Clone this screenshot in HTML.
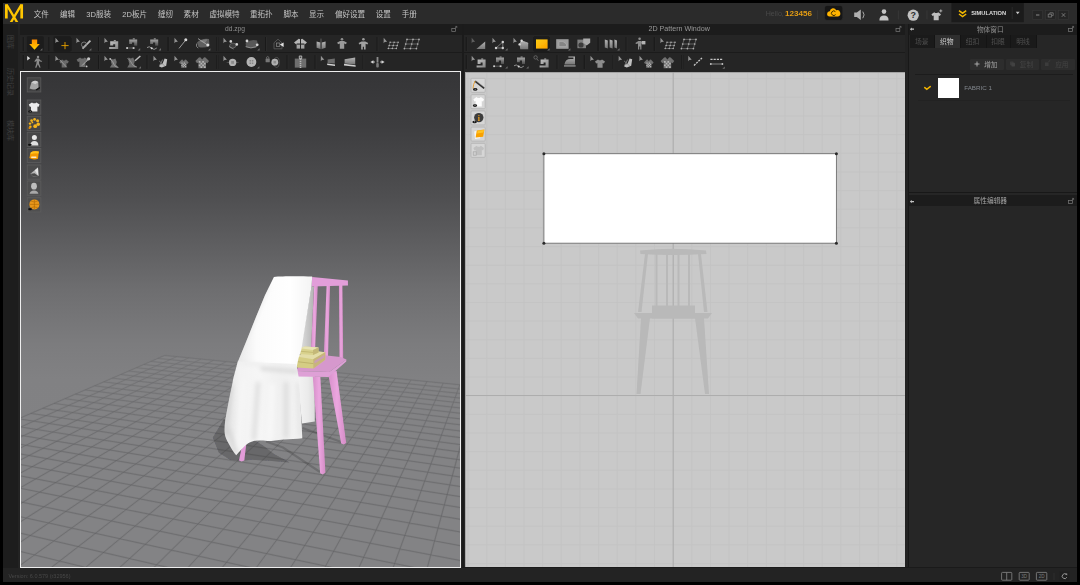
<!DOCTYPE html><html lang="zh-CN"><head><meta charset="utf-8"><title>Marvelous Designer</title><style>
*{margin:0;padding:0;box-sizing:border-box}
html,body{width:1080px;height:585px;background:#000;overflow:hidden}
body{font-family:"Liberation Sans","Noto Sans CJK SC",sans-serif;font-size:8px;color:#bdbdbd;position:relative}
.a{position:absolute}
.t{position:absolute;white-space:nowrap;line-height:1}
svg{position:absolute;overflow:visible}
#app{left:3px;top:3px;width:1074px;height:579px;background:#252525;overflow:hidden}
#menu{left:0;top:0;width:1074px;height:21px;background:#2b2b2b}
.mi{top:8.2px;font-size:7.55px;color:#c4c4c4;filter:blur(0.25px)}
.tb{height:11px;top:21px;background:#1c1c1c}
.tt{top:23.1px;font-size:6.7px;color:#8f8f8f;text-align:center;filter:blur(0.25px)}
.vt{font-size:7px;color:#3f3f3f;transform-origin:0 0;transform:rotate(90deg)}
.sep{width:1px;background:#1a1a1a}
.hl{height:1px;background:#1a1a1a}
</style></head><body>
<div id="app" class="a">
<div id="menu" class="a"></div>
<div class="t mi" style="left:30.8px">文件</div>
<div class="t mi" style="left:57.0px">编辑</div>
<div class="t mi" style="left:83.3px">3D服装</div>
<div class="t mi" style="left:119.3px">2D板片</div>
<div class="t mi" style="left:154.9px">缝纫</div>
<div class="t mi" style="left:180.6px">素材</div>
<div class="t mi" style="left:206.4px">虚拟模特</div>
<div class="t mi" style="left:246.9px">重拓扑</div>
<div class="t mi" style="left:280.4px">脚本</div>
<div class="t mi" style="left:306.0px">显示</div>
<div class="t mi" style="left:331.9px">偏好设置</div>
<div class="t mi" style="left:372.8px">设置</div>
<div class="t mi" style="left:398.7px">手册</div>
<svg width="1074" height="579" viewBox="3 3 1074 579" style="left:0;top:0" ><clipPath id="lc"><rect x="4" y="4.300" width="20" height="17.700"/></clipPath><g fill="none" stroke="#ffc600" clip-path="url(#lc)"><path d="M6.350 18.500V4M21.700 18.500V4" stroke-width="2.700"/><path d="M6.600 4.600L17.300 22.600M21.450 4.600L10.750 22.600" stroke-width="2.300"/></g><rect x="824.4" y="5.400" width="18.400" height="15" rx="2.600" fill="#161616" stroke="#303030" stroke-width="0.6"/><path d="M829.600 16.400a2.600 2.600 0 0 1 0.200-5.200a3.400 3.400 0 0 1 6.400-1a3.200 3.200 0 0 1 1.800 6.200z" fill="#ffb400"/><path d="M835.400 11.600a2.300 2.300 0 1 0 0.200 3" stroke="#3a2a00" stroke-width="1" fill="none"/><path d="M854.200 12.600h2.600l4-3v10.400l-4-3h-2.600z" fill="#b0b0b0"/><path d="M862.800 11.600q2.600 3.200 0 6.600" stroke="#a8a8a8" stroke-width="1" fill="none"/><path d="M817.600 10.400v9M898.400 10.400v9M927 10.400v9" stroke="#3a3a3a" stroke-width="0.8"/><circle cx="884" cy="11.600" r="2.300" fill="#c4c4c4"/><path d="M879.400 20.400q0-5 4.600-5t4.600 5z" fill="#c4c4c4"/><circle cx="913.200" cy="15.200" r="5.600" fill="#c2c2c2"/><text x="913.200" y="18.400" font-size="9" font-weight="bold" text-anchor="middle" fill="#2b2b2b" font-family="Liberation Sans, sans-serif">?</text><path d="M931.4 14.2L934.3 12.2L935.2 13.0L937.2 13.0L938.1 12.2L941.0 14.2L939.8 16.1L938.7 15.6L938.7 20.2L933.7 20.2L933.7 15.6L932.6 16.1Z" fill="#c0c0c0"/><path d="M940.800 9.400v3M939.300 10.900h3" stroke="#c8c8c8" stroke-width="0.800"/><rect x="951.400" y="3" width="72.400" height="19.200" fill="#1b1b1b"/><path d="M959 10.600l3.600 2.600l3.600-2.600M959 14l3.600 2.600l3.600-2.600" stroke="#f2b800" stroke-width="1.500" fill="none"/><path d="M1012.200 7v12" stroke="#2e2e2e" stroke-width="0.8"/><path d="M1015.800 11.800h3.800l-1.900 2.400z" fill="#c8c8c8"/><rect x="1032.8" y="10.600" width="9.800" height="8.800" fill="#252525" stroke="#383838" stroke-width="0.6"/><rect x="1045.6" y="10.600" width="9.800" height="8.800" fill="#252525" stroke="#383838" stroke-width="0.6"/><rect x="1058.6" y="10.600" width="9.800" height="8.800" fill="#252525" stroke="#383838" stroke-width="0.6"/><path d="M1036 15h3.400" stroke="#8a8a8a" stroke-width="1"/><rect x="1048.200" y="14.200" width="3.400" height="2.800" fill="none" stroke="#7a7a7a" stroke-width="0.8"/><path d="M1049.800 14v-1.200h3.400v2.800h-1.400" fill="none" stroke="#7a7a7a" stroke-width="0.8"/><path d="M1061.800 13.200l3.400 3.600M1065.200 13.200l-3.400 3.600" stroke="#7a7a7a" stroke-width="0.9"/></svg><div class="t" style="left:968.200px;top:7.900px;font-size:5.700px;font-weight:bold;color:#dcdcdc;filter:blur(0.2px)">SIMULATION</div><div class="t" style="left:762.700px;top:8px;font-size:7.100px;color:#4a4a4a;filter:blur(0.25px)">Hello,</div><div class="t" style="left:781.900px;top:7.300px;font-size:8.100px;font-weight:bold;color:#e39c14;filter:blur(0.25px)">123456</div>
<div class="a" style="left:0;top:21px;width:15px;height:544px;background:#1d1d1d"></div>
<div class="a" style="left:15px;top:21px;width:2px;height:544px;background:#232323"></div>
<div class="t vt" style="left:11px;top:32px">图库</div>
<div class="t vt" style="left:11px;top:65px">历史记录</div>
<div class="t vt" style="left:11px;top:117px">模块库</div>
<div class="a tb" style="left:17px;width:442px"></div>
<div class="a tb" style="left:461px;width:442px"></div>
<div class="a tb" style="left:906px;width:168px"></div>
<div class="t tt" style="left:132px;width:200px">dd.zpg</div>
<div class="t tt" style="left:576.2px;width:200px;font-size:7.150px;color:#999">2D Pattern Window</div>
<div class="t tt" style="left:887.3px;top:23.900px;width:200px;color:#909090">物体窗口</div>
<div class="a" style="left:17px;top:32px;width:886px;height:36px;background:#252525"></div>
<div class="a hl" style="left:17px;top:49px;width:886px;background:#1b1b1b"></div>
<svg width="1074" height="579" viewBox="3 3 1074 579" style="left:0;top:0" ><defs><filter id="ib" x="-20%" y="-20%" width="140%" height="140%"><feGaussianBlur stdDeviation="0.35"/></filter><linearGradient id="og" x1="0" y1="0" x2="0" y2="1"><stop offset="0" stop-color="#ff8a00"/><stop offset="1" stop-color="#ffd200"/></linearGradient><linearGradient id="og2" x1="0" y1="0" x2="1" y2="1"><stop offset="0" stop-color="#ffcf10"/><stop offset="1" stop-color="#ffa200"/></linearGradient><linearGradient id="mg" x1="0" y1="0" x2="1" y2="1"><stop offset="0" stop-color="#c4c4c4"/><stop offset="1" stop-color="#858585"/></linearGradient><linearGradient id="mf" x1="0" y1="0" x2="0" y2="1"><stop offset="0" stop-color="#a2a2a2"/><stop offset="1" stop-color="#4c4c4c"/></linearGradient><linearGradient id="gg" x1="0" y1="0" x2="0" y2="1"><stop offset="0" stop-color="#b4b4b4"/><stop offset="1" stop-color="#777"/></linearGradient></defs><g filter="url(#ib)"><path d="M23.4 37V51" stroke="#1b1b1b" stroke-width="0.900"/><path d="M24.4 37V51" stroke="#2a2a2a" stroke-width="0.600"/><path d="M48.9 37V51" stroke="#1b1b1b" stroke-width="0.900"/><path d="M49.9 37V51" stroke="#2a2a2a" stroke-width="0.600"/><path d="M23.4 55V69" stroke="#1b1b1b" stroke-width="0.900"/><path d="M24.4 55V69" stroke="#2a2a2a" stroke-width="0.600"/><path d="M48.9 55V69" stroke="#1b1b1b" stroke-width="0.900"/><path d="M49.9 55V69" stroke="#2a2a2a" stroke-width="0.600"/><path d="M466.4 55V69" stroke="#1b1b1b" stroke-width="0.900"/><path d="M467.4 55V69" stroke="#2a2a2a" stroke-width="0.600"/><rect x="26.7" y="36.6" width="16.8" height="15" rx="1" fill="#1b1b1b"/><rect x="53.6" y="36.6" width="17.6" height="15" rx="1" fill="#1b1b1b"/><path d="M31.8 39.4h5.4v4.6h2.6L34.5 49.8L29.2 44h2.6z" fill="url(#og)"/><path d="M42.4 50.6L40.0 50.6L42.4 48.2Z" fill="#6c6c6c"/><path d="M55.5 37.7L58.9 41.8L56.5 42.0L55.4 43.2Z" fill="#929292"/><path d="M65 42v7.200M61.400 45.600h7.200" stroke="#e29c00" stroke-width="0.950"/><path d="M76.5 37.7L79.9 41.8L77.5 42.0L76.4 43.2Z" fill="#929292"/><path d="M82.5 48.6L90.4 40.6" stroke="#b8b8b8" stroke-width="1.8"/><circle cx="84" cy="44.6" r="2.6" fill="none" stroke="#8a8a8a" stroke-width="0.8"/><path d="M91.4 50.6L89.0 50.6L91.4 48.2Z" fill="#6c6c6c"/><path d="M98.5 37V51" stroke="#1b1b1b" stroke-width="0.900"/><path d="M99.5 37V51" stroke="#2a2a2a" stroke-width="0.600"/><path d="M104.5 37.7L107.9 41.8L105.5 42.0L104.4 43.2Z" fill="#929292"/><path d="M110.2 41.2h8v7.8h-9v-2h6v-2.8h-2v1.400h-3z" fill="url(#mg)"/><rect x="113.8" y="40.0" width="2" height="1.400" fill="#9a9a9a"/><path d="M129.2 39.4h8v6.400h-3v-3.400h-2.200v1.600h-2.800z" fill="url(#mf)"/><rect x="132.8" y="38.2" width="2" height="1.400" fill="#8a8a8a"/><path d="M127 48h7" stroke="#6a6a6a" stroke-width="0.800"/><rect x="126.200" y="47.200" width="1.800" height="1.700" fill="#cfcfcf"/><rect x="132.700" y="47.200" width="1.800" height="1.700" fill="#cfcfcf"/><path d="M140.2 50.4L137.79999999999998 50.4L140.2 48.0Z" fill="#6c6c6c"/><path d="M150.2 39.4h8v6.400h-3v-3.400h-2.200v1.600h-2.800z" fill="url(#mf)"/><rect x="153.8" y="38.2" width="2" height="1.400" fill="#8a8a8a"/><path d="M147 47.600q2.200-2 4.600 0.600t5.200-0.200" stroke="#9a9a9a" stroke-width="0.900" fill="none"/><circle cx="151.700" cy="48.200" r="1" fill="#d4d4d4"/><path d="M161 50.4L158.6 50.4L161 48.0Z" fill="#6c6c6c"/><path d="M168.3 37V51" stroke="#1b1b1b" stroke-width="0.900"/><path d="M169.3 37V51" stroke="#2a2a2a" stroke-width="0.600"/><path d="M174.5 37.7L177.9 41.8L175.5 42.0L174.4 43.2Z" fill="#929292"/><path d="M179 48.4L185.6 40.2" stroke="#a8a8a8" stroke-width="0.9"/><circle cx="185.8" cy="39.8" r="1.5" fill="#d8d8d8"/><path d="M197 42.4q5-4.6 12-3.4l0.6 6.4q-5 3.4-11 1.6z" fill="#5e5e5e"/><path d="M199.600 41q4-2 8-1.600l-3 4z" fill="#7a7a7a"/><path d="M198 38.6L207.6 45" stroke="#a4a4a4" stroke-width="0.9"/><circle cx="207.8" cy="45" r="1.5" fill="#dcdcdc"/><path d="M196.6 43.6q-1 3 1.6 4.6" stroke="#9a9a9a" stroke-width="0.8" fill="none"/><path d="M210.4 50.6L208.0 50.6L210.4 48.2Z" fill="#6c6c6c"/><path d="M216.7 37V51" stroke="#1b1b1b" stroke-width="0.900"/><path d="M217.7 37V51" stroke="#2a2a2a" stroke-width="0.600"/><path d="M223.5 37.7L226.9 41.8L224.5 42.0L223.4 43.2Z" fill="#929292"/><path d="M229.600 45.600q1-4 7-1.400q-0.600 4-4 4t-3-2.600z" fill="#3c3c3c" stroke="#6c6c6c" stroke-width="0.800"/><circle cx="230.8" cy="41.4" r="1.3" fill="#d4d4d4"/><circle cx="236.8" cy="44.4" r="1.3" fill="#d4d4d4"/><path d="M229 46.4l4.6 2.6" stroke="#8c8c8c" stroke-width="0.8"/><path d="M245.600 43q6-4.600 11.400-2.400q1.600 4.600-1 7q-5 1.600-10-0.600z" fill="#585858"/><circle cx="247" cy="41" r="1.4" fill="#d4d4d4"/><circle cx="257.2" cy="44.8" r="1.4" fill="#d4d4d4"/><path d="M245.6 46.6q5 2.6 11 0" stroke="#999" stroke-width="0.8" fill="none"/><path d="M259.6 50.6L257.20000000000005 50.6L259.6 48.2Z" fill="#6c6c6c"/><path d="M265.5 37V51" stroke="#1b1b1b" stroke-width="0.900"/><path d="M266.5 37V51" stroke="#2a2a2a" stroke-width="0.600"/><path d="M274 42.800l4-3.600l4 3.600v6h-8z" fill="none" stroke="#585858" stroke-width="0.900"/><rect x="276.400" y="43" width="3.400" height="3.400" fill="#2c2c2c" stroke="#8a8a8a" stroke-width="0.700"/><path d="M279.800 44.600l3.800-2v4.400z" fill="#e0e0e0"/><path d="M294 42.6l4.8-3.8l1.2 0.4v4.4h-3.4v1.2z" fill="#b6b6b6"/><path d="M307 42.6l-4.8-3.8l-1.2 0.4v4.4h3.4v1.2z" fill="#b6b6b6"/><rect x="296.6" y="44.6" width="3.4" height="4" fill="#a2a2a2"/><rect x="301" y="44.6" width="3.4" height="4" fill="#a2a2a2"/><path d="M316.6 41.6l3.8 1v6.4l-3.8-1.2zM325.6 41.6l-3.8 1v6.4l3.8-1.2z" fill="url(#gg)"/><path d="M321 38.6v10.6" stroke="#6a6a6a" stroke-width="0.8"/><circle cx="342" cy="39.2" r="1.3" fill="#8e8e8e"/><path d="M337.2 42.6l3-1.6h3.6l3 1.6l-0.8 1.6l-1.8-0.6v5.2h-4.4v-5.2l-1.8 0.6z" fill="#9a9a9a"/><circle cx="363.4" cy="39.2" r="1.3" fill="#9a9a9a"/><path d="M358.6 43l3-1.6h3.6l3 1.6l-0.8 1.4l-1.8-0.6v5.6h-1.6v-2.6h-1.2v2.6h-1.6v-5.6l-1.8 0.6z" fill="#a2a2a2"/><path d="M377 37V51" stroke="#1b1b1b" stroke-width="0.900"/><path d="M378 37V51" stroke="#2a2a2a" stroke-width="0.600"/><path d="M383.7 37.7L387.1 41.8L384.7 42.0L383.6 43.2Z" fill="#929292"/><path d="M390.1 42.3H398.1M390.1 42.3L388.3 48.5M389.2 45.4H397.2M394.1 42.3L392.3 48.5M388.3 48.5H396.3M398.1 42.3L396.3 48.5" stroke="#6e6e6e" stroke-width="0.8" fill="none"/><circle cx="390.1" cy="42.3" r="0.75" fill="#b4b4b4"/><circle cx="394.1" cy="42.3" r="0.75" fill="#b4b4b4"/><circle cx="398.1" cy="42.3" r="0.75" fill="#b4b4b4"/><circle cx="389.2" cy="45.4" r="0.75" fill="#b4b4b4"/><circle cx="393.2" cy="45.4" r="0.75" fill="#b4b4b4"/><circle cx="397.2" cy="45.4" r="0.75" fill="#b4b4b4"/><circle cx="388.3" cy="48.5" r="0.75" fill="#b4b4b4"/><circle cx="392.3" cy="48.5" r="0.75" fill="#b4b4b4"/><circle cx="396.3" cy="48.5" r="0.75" fill="#b4b4b4"/><path d="M407.0 39.4H419.0M407.0 39.4L404.4 48.6M405.7 44.0H417.7M413.0 39.4L410.4 48.6M404.4 48.6H416.4M419.0 39.4L416.4 48.6" stroke="#6e6e6e" stroke-width="0.8" fill="none"/><circle cx="407.0" cy="39.4" r="0.85" fill="#b0b0b0"/><circle cx="413.0" cy="39.4" r="0.85" fill="#b0b0b0"/><circle cx="419.0" cy="39.4" r="0.85" fill="#b0b0b0"/><circle cx="405.7" cy="44.0" r="0.85" fill="#b0b0b0"/><circle cx="411.7" cy="44.0" r="0.85" fill="#b0b0b0"/><circle cx="417.7" cy="44.0" r="0.85" fill="#b0b0b0"/><circle cx="404.4" cy="48.6" r="0.85" fill="#b0b0b0"/><circle cx="410.4" cy="48.6" r="0.85" fill="#b0b0b0"/><circle cx="416.4" cy="48.6" r="0.85" fill="#b0b0b0"/><path d="M27.2 56l3 2.2l-3 2.2z" fill="#dcdcdc"/><circle cx="38" cy="57" r="1.2" fill="#8c8c8c"/><path d="M36.4 58.6l2.4-0.2l1.8 2.2l1.6 0.4l-0.4 0.8l-2-0.2l-0.6-0.8l-0.2 2.4l1.6 4.2l-1 0.4l-1.8-3.6l-1.6 3.8l-1-0.4l1.2-4.2l0.2-2.6l-1.6 1.2l-0.6-0.8z" fill="#8c8c8c"/><path d="M55.5 55.7L58.9 59.8L56.5 60.0L55.4 61.2Z" fill="#929292"/><path d="M59.4 61.6L62.2 59.6L63.2 60.4L65.0 60.4L66.0 59.6L68.8 61.6L67.7 63.5L66.5 63.0L66.5 67.6L61.7 67.6L61.7 63.0L60.5 63.5Z" fill="#6a6a6a"/><path d="M59.6 59.6l7 7.6" stroke="#a2a2a2" stroke-width="0.8"/><path d="M76.6 59.7L80.1 57.4L81.2 58.4L83.6 58.4L84.7 57.4L88.2 59.7L86.8 62.1L85.4 61.5L85.4 67.0L79.4 67.0L79.4 61.5L78.0 62.1Z" fill="#6c6c6c"/><path d="M82 65.6L89.6 58" stroke="#b4b4b4" stroke-width="0.9"/><circle cx="88.6" cy="58.8" r="1.6" fill="#c8c8c8"/><circle cx="86.6" cy="66.4" r="0.9" fill="#c8c8c8"/><path d="M98.5 55V69" stroke="#1b1b1b" stroke-width="0.900"/><path d="M99.5 55V69" stroke="#2a2a2a" stroke-width="0.600"/><path d="M104.5 55.7L107.9 59.8L105.5 60.0L104.4 61.2Z" fill="#929292"/><path d="M110.600 58.600l2.400 0.800l2.400-0.800l1.400 3.400l-0.800 2.600l2.200 3h-8.400l2-3l-0.800-2.600z" fill="#707070"/><path d="M110 58.800q3.200 2.600 4 5.600t4.400 3" stroke="#a8a8a8" stroke-width="0.800" fill="none"/><circle cx="110.200" cy="59" r="0.900" fill="#b8b8b8"/><path d="M128.400 57.600l2.400 0.800l2.400-0.800l1.600 3.600l-0.800 2.800l2.600 3.400h-9.400l2.200-3.400l-0.800-2.800z" fill="#6c6c6c"/><path d="M127.600 58.200q3.200 2.600 4.400 5.600t5 3.200" stroke="#a0a0a0" stroke-width="0.800" fill="none"/><path d="M135 60.800l5.400-4.800" stroke="#bcbcbc" stroke-width="1.500"/><path d="M141 68.6L138.6 68.6L141 66.19999999999999Z" fill="#6c6c6c"/><path d="M147 55V69" stroke="#1b1b1b" stroke-width="0.900"/><path d="M148 55V69" stroke="#2a2a2a" stroke-width="0.600"/><path d="M153.5 55.7L156.9 59.8L154.5 60.0L153.4 61.2Z" fill="#929292"/><path d="M164.6 58.4l2.6 0.8l-1 6.6l-4.4 1.8l-2.6-1l0.6-2.2l2.6-0.4z" fill="#c0c0c0"/><path d="M159.2 61l5.6 5M162.6 59.6l-2.6 5.6" stroke="#8c8c8c" stroke-width="0.8"/><path d="M174.5 55.7L177.9 59.8L175.5 60.0L174.4 61.2Z" fill="#929292"/><path d="M179.0 62.4L181.5 59.7L182.5 59.5L183.8 61.2L185.1 59.5L186.1 59.7L188.6 62.4L187.4 64.0L186.5 63.4L186.5 67.8L181.1 67.8L181.1 63.4L180.2 64.0Z" fill="#6f6f6f"/><path d="M181.4 62.5h1.2v1.2h-1.2zM181.4 64.9h1.2v1.2h-1.2zM182.6 63.7h1.2v1.2h-1.2zM182.6 66.1h1.2v1.2h-1.2zM183.8 62.5h1.2v1.2h-1.2zM183.8 64.9h1.2v1.2h-1.2zM185.0 63.7h1.2v1.2h-1.2zM185.0 66.1h1.2v1.2h-1.2z" fill="#b4b4b4"/><path d="M195.4 61.1L198.9 57.6L200.3 57.3L202.2 59.5L204.1 57.3L205.5 57.6L209.0 61.1L207.4 63.2L206.0 62.5L206.0 68.2L198.4 68.2L198.4 62.5L197.0 63.2Z" fill="#6f6f6f"/><path d="M198.8 61.1h1.7v1.7h-1.7zM198.8 64.5h1.7v1.7h-1.7zM200.5 62.8h1.7v1.7h-1.7zM200.5 66.2h1.7v1.7h-1.7zM202.2 61.1h1.7v1.7h-1.7zM202.2 64.5h1.7v1.7h-1.7zM203.9 62.8h1.7v1.7h-1.7zM203.9 66.2h1.7v1.7h-1.7z" fill="#b4b4b4"/><path d="M216.7 55V69" stroke="#1b1b1b" stroke-width="0.900"/><path d="M217.7 55V69" stroke="#2a2a2a" stroke-width="0.600"/><path d="M223.5 55.7L226.9 59.8L224.5 60.0L223.4 61.2Z" fill="#929292"/><path d="M226.600 62.400h12" stroke="#5a5a5a" stroke-width="0.700"/><circle cx="232.600" cy="62.400" r="3.700" fill="#b2b2b2"/><rect x="231.200" y="61" width="2.800" height="2.800" fill="#8c8c8c"/><circle cx="251.400" cy="62" r="4.900" fill="#b4b4b4"/><path d="M249.500 60.100h1.500v1.500h-1.500zM251.800 60.100h1.500v1.500h-1.500zM249.500 62.400h1.500v1.500h-1.500zM251.800 62.400h1.500v1.500h-1.500z" fill="#868686"/><path d="M259.4 68.6L257.0 68.6L259.4 66.19999999999999Z" fill="#6c6c6c"/><rect x="265.6" y="58.6" width="4.2" height="3.6" rx="0.5" fill="#777"/><path d="M266.6 58.6v-1.400q1.100-1.400 2.200 0v1.400" stroke="#777" stroke-width="0.8" fill="none"/><ellipse cx="276.600" cy="62.400" rx="2.600" ry="5" fill="none" stroke="#5a5a5a" stroke-width="0.800"/><circle cx="274.800" cy="62.200" r="3.400" fill="#b2b2b2"/><rect x="273.500" y="60.900" width="2.600" height="2.600" fill="#8c8c8c"/><path d="M287 55V69" stroke="#1b1b1b" stroke-width="0.900"/><path d="M288 55V69" stroke="#2a2a2a" stroke-width="0.600"/><rect x="294.8" y="58.6" width="11.400" height="9" fill="#6e6e6e"/><path d="M300.500 57v11" stroke="#b8b8b8" stroke-width="1.6" stroke-dasharray="1.2 0.8"/><rect x="298.8" y="55.6" width="3.400" height="3.600" rx="1" fill="#a8a8a8"/><rect x="299.800" y="56.6" width="1.400" height="1.400" fill="#4a4a4a"/><path d="M315 55V69" stroke="#1b1b1b" stroke-width="0.900"/><path d="M316 55V69" stroke="#2a2a2a" stroke-width="0.600"/><path d="M320.9 55.7L324.3 59.8L321.9 60.0L320.8 61.2Z" fill="#929292"/><path d="M327.6 59.400l7.200-0.800v4.800l-7.200-0.400z" fill="#6c6c6c"/><path d="M327.200 63.400l7.800 1v1.600l-7.800-1z" fill="#d4d4d4"/><path d="M344.6 59.200l10.600-1.800v7l-10.600-1z" fill="url(#gg)"/><path d="M344 63.800l11.600 1.400v1.600l-11.600-1.400z" fill="#cfcfcf"/><path d="M362.8 55V69" stroke="#1b1b1b" stroke-width="0.900"/><path d="M363.8 55V69" stroke="#2a2a2a" stroke-width="0.600"/><rect x="376.600" y="57" width="1.800" height="5.600" fill="#8c8c8c"/><rect x="376.200" y="63" width="2.600" height="4.400" rx="1" fill="#7a7a7a"/><path d="M370.400 62l3-1.800v3.600zM384.600 62l-3-1.800v3.600z" fill="#d4d4d4"/><path d="M372.600 62h2.200M380.200 62h2.200" stroke="#d4d4d4" stroke-width="1.2"/><path d="M466.4 37V51" stroke="#1b1b1b" stroke-width="0.900"/><path d="M467.4 37V51" stroke="#2a2a2a" stroke-width="0.600"/><path d="M471.7 37.7L475.1 41.8L472.7 42.0L471.6 43.2Z" fill="#5e5e5e"/><path d="M476.4 49l8.800-7.400v7.400z" fill="url(#gg)"/><path d="M492.5 37.7L495.9 41.8L493.5 42.0L492.4 43.2Z" fill="#929292"/><path d="M496 48l6.800-6v6z" fill="none" stroke="#8a8a8a" stroke-width="0.8"/><circle cx="496" cy="48" r="1.200" fill="#d0d0d0"/><circle cx="502.800" cy="42" r="1.200" fill="#d0d0d0"/><circle cx="502.800" cy="48" r="1.200" fill="#d0d0d0"/><path d="M507.6 50.6L505.20000000000005 50.6L507.6 48.2Z" fill="#6c6c6c"/><path d="M513.5 37.7L516.9 41.8L514.5 42.0L513.4 43.2Z" fill="#929292"/><path d="M519.600 44.400l2-3.600l6.600 2.400v6h-8z" fill="url(#gg)"/><path d="M519.600 44.400l2-3.600l6.600 2.400" fill="none" stroke="#b8b8b8" stroke-width="0.8"/><circle cx="521.6" cy="40.800" r="1.200" fill="#d8d8d8"/><circle cx="519.600" cy="44.400" r="1.200" fill="#d8d8d8"/><rect x="533.2" y="36.6" width="16.600" height="15" rx="1" fill="#1b1b1b"/><rect x="536" y="39.400" width="11.600" height="9.200" fill="url(#og2)"/><path d="M549.6 50.6L547.2 50.6L549.6 48.2Z" fill="#6c6c6c"/><rect x="556.200" y="39.200" width="12.400" height="9.600" fill="#9c9c9c"/><path d="M559 41.600h4l3.400 2.400v2.600h-7.400z" fill="#848484" stroke="#b4b4b4" stroke-width="0.6"/><path d="M570.4 50.6L568.0 50.6L570.4 48.2Z" fill="#6c6c6c"/><rect x="577.4" y="39.600" width="8.600" height="8.600" fill="#7e7e7e"/><circle cx="581" cy="45" r="2.600" fill="#3a3a3a"/><path d="M583.2 38.400h7v4.400l-3.500 2.800l-3.500-2.800z" fill="#ababab"/><path d="M598.3 37V51" stroke="#1b1b1b" stroke-width="0.900"/><path d="M599.3 37V51" stroke="#2a2a2a" stroke-width="0.600"/><path d="M604.8 39.400l3 1v8l-3-1zM609.600 39.400l3 1v8l-3-1zM614.400 39.400l2.600 1v8l-2.600-1z" fill="url(#gg)"/><path d="M619.6 50.6L617.2 50.6L619.6 48.2Z" fill="#6c6c6c"/><path d="M626 37V51" stroke="#1b1b1b" stroke-width="0.900"/><path d="M627 37V51" stroke="#2a2a2a" stroke-width="0.600"/><circle cx="639.600" cy="38.800" r="1.300" fill="#8e8e8e"/><path d="M635.400 43l3-2h2.600l3 2l-0.600 1l-2-0.600v6h-1.200v-2.800h-1v2.800h-1.200v-6l-2 0.600z" fill="#8e8e8e"/><rect x="642" y="41" width="3.400" height="3.400" fill="#b4b4b4"/><path d="M654.4 37V51" stroke="#1b1b1b" stroke-width="0.900"/><path d="M655.4 37V51" stroke="#2a2a2a" stroke-width="0.600"/><path d="M660.5 37.7L663.9 41.8L661.5 42.0L660.4 43.2Z" fill="#929292"/><path d="M667.0 42.3H675.0M667.0 42.3L665.2 48.5M666.1 45.4H674.1M671.0 42.3L669.2 48.5M665.2 48.5H673.2M675.0 42.3L673.2 48.5" stroke="#6e6e6e" stroke-width="0.8" fill="none"/><circle cx="667.0" cy="42.3" r="0.75" fill="#b4b4b4"/><circle cx="671.0" cy="42.3" r="0.75" fill="#b4b4b4"/><circle cx="675.0" cy="42.3" r="0.75" fill="#b4b4b4"/><circle cx="666.1" cy="45.4" r="0.75" fill="#b4b4b4"/><circle cx="670.1" cy="45.4" r="0.75" fill="#b4b4b4"/><circle cx="674.1" cy="45.4" r="0.75" fill="#b4b4b4"/><circle cx="665.2" cy="48.5" r="0.75" fill="#b4b4b4"/><circle cx="669.2" cy="48.5" r="0.75" fill="#b4b4b4"/><circle cx="673.2" cy="48.5" r="0.75" fill="#b4b4b4"/><path d="M684.0 39.4H696.0M684.0 39.4L681.4 48.6M682.7 44.0H694.7M690.0 39.4L687.4 48.6M681.4 48.6H693.4M696.0 39.4L693.4 48.6" stroke="#6e6e6e" stroke-width="0.8" fill="none"/><circle cx="684.0" cy="39.4" r="0.85" fill="#b0b0b0"/><circle cx="690.0" cy="39.4" r="0.85" fill="#b0b0b0"/><circle cx="696.0" cy="39.4" r="0.85" fill="#b0b0b0"/><circle cx="682.7" cy="44.0" r="0.85" fill="#b0b0b0"/><circle cx="688.7" cy="44.0" r="0.85" fill="#b0b0b0"/><circle cx="694.7" cy="44.0" r="0.85" fill="#b0b0b0"/><circle cx="681.4" cy="48.6" r="0.85" fill="#b0b0b0"/><circle cx="687.4" cy="48.6" r="0.85" fill="#b0b0b0"/><circle cx="693.4" cy="48.6" r="0.85" fill="#b0b0b0"/><path d="M471.7 55.7L475.1 59.8L472.7 60.0L471.6 61.2Z" fill="#929292"/><path d="M477.6 59.6h8v7.8h-9v-2h6v-2.8h-2v1.400h-3z" fill="url(#mg)"/><rect x="481.2" y="58.4" width="2" height="1.400" fill="#9a9a9a"/><path d="M496.0 57.6h8v6.400h-3v-3.400h-2.200v1.600h-2.800z" fill="url(#mf)"/><rect x="499.6" y="56.4" width="2" height="1.400" fill="#8a8a8a"/><path d="M494 66.200h7" stroke="#6a6a6a" stroke-width="0.800"/><rect x="493.200" y="65.400" width="1.800" height="1.700" fill="#cfcfcf"/><rect x="499.700" y="65.400" width="1.800" height="1.700" fill="#cfcfcf"/><path d="M507.6 68.6L505.20000000000005 68.6L507.6 66.19999999999999Z" fill="#6c6c6c"/><path d="M517.0 57.6h8v6.400h-3v-3.400h-2.200v1.600h-2.800z" fill="url(#mf)"/><rect x="520.6" y="56.4" width="2" height="1.400" fill="#8a8a8a"/><path d="M514 65.800q2.200-2 4.600 0.600t5.200-0.200" stroke="#9a9a9a" stroke-width="0.900" fill="none"/><circle cx="518.700" cy="66.400" r="1" fill="#d4d4d4"/><path d="M528.6 68.6L526.2 68.6L528.6 66.19999999999999Z" fill="#6c6c6c"/><circle cx="535.600" cy="57.400" r="1.700" fill="none" stroke="#777" stroke-width="0.7"/><path d="M536.800 58.800l1.600 2" stroke="#777" stroke-width="0.8"/><path d="M540.6 59.6h8v7.8h-9v-2h6v-2.8h-2v1.400h-3z" fill="url(#mg)"/><rect x="544.2" y="58.4" width="2" height="1.400" fill="#9a9a9a"/><path d="M557 55V69" stroke="#1b1b1b" stroke-width="0.900"/><path d="M558 55V69" stroke="#2a2a2a" stroke-width="0.600"/><path d="M564.400 64.400q1-5.400 6-5.400h3v-1.400h-5v-1.200h6.600v8z" fill="url(#gg)"/><rect x="564" y="65" width="11.600" height="1.800" fill="#777"/><path d="M584.4 55V69" stroke="#1b1b1b" stroke-width="0.900"/><path d="M585.4 55V69" stroke="#2a2a2a" stroke-width="0.600"/><path d="M590.5 55.7L593.9 59.8L591.5 60.0L590.4 61.2Z" fill="#929292"/><path d="M595.0 61.5L598.0 59.4L599.0 60.2L601.0 60.2L602.0 59.4L605.0 61.5L603.8 63.5L602.6 62.9L602.6 67.8L597.4 67.8L597.4 62.9L596.2 63.5Z" fill="#8c8c8c"/><path d="M612.8 55V69" stroke="#1b1b1b" stroke-width="0.900"/><path d="M613.8 55V69" stroke="#2a2a2a" stroke-width="0.600"/><path d="M618.7 55.7L622.1 59.8L619.7 60.0L618.6 61.2Z" fill="#929292"/><path d="M629.600 58.400l2.600 0.800l-1 6.600l-4.400 1.800l-2.600-1l0.600-2.200l2.600-0.400z" fill="#c0c0c0"/><path d="M624.200 61l5.600 5M627.600 59.600l-2.600 5.600" stroke="#8c8c8c" stroke-width="0.8"/><path d="M639.5 55.7L642.9 59.8L640.5 60.0L639.4 61.2Z" fill="#929292"/><path d="M644.0 62.4L646.5 59.7L647.5 59.5L648.8 61.2L650.1 59.5L651.1 59.7L653.6 62.4L652.4 64.0L651.5 63.4L651.5 67.8L646.1 67.8L646.1 63.4L645.2 64.0Z" fill="#6f6f6f"/><path d="M646.4 62.5h1.2v1.2h-1.2zM646.4 64.9h1.2v1.2h-1.2zM647.6 63.7h1.2v1.2h-1.2zM647.6 66.1h1.2v1.2h-1.2zM648.8 62.5h1.2v1.2h-1.2zM648.8 64.9h1.2v1.2h-1.2zM650.0 63.7h1.2v1.2h-1.2zM650.0 66.1h1.2v1.2h-1.2z" fill="#b4b4b4"/><path d="M660.6 61.1L664.1 57.6L665.5 57.3L667.4 59.5L669.3 57.3L670.7 57.6L674.2 61.1L672.6 63.2L671.2 62.5L671.2 68.2L663.6 68.2L663.6 62.5L662.2 63.2Z" fill="#6f6f6f"/><path d="M664.0 61.1h1.7v1.7h-1.7zM664.0 64.5h1.7v1.7h-1.7zM665.7 62.8h1.7v1.7h-1.7zM665.7 66.2h1.7v1.7h-1.7zM667.4 61.1h1.7v1.7h-1.7zM667.4 64.5h1.7v1.7h-1.7zM669.1 62.8h1.7v1.7h-1.7zM669.1 66.2h1.7v1.7h-1.7z" fill="#b4b4b4"/><path d="M681.7 55V69" stroke="#1b1b1b" stroke-width="0.900"/><path d="M682.7 55V69" stroke="#2a2a2a" stroke-width="0.600"/><path d="M688.3 55.7L691.7 59.8L689.3 60.0L688.2 61.2Z" fill="#929292"/><path d="M694 65.400l8-7.400" stroke="#c8c8c8" stroke-width="1.300" stroke-dasharray="2 1"/><path d="M710.400 59.400h12.400" stroke="#c4c4c4" stroke-width="1.400" stroke-dasharray="2.200 1"/><path d="M710.400 64h12" stroke="#8c8c8c" stroke-width="0.900"/><circle cx="710.800" cy="64" r="0.900" fill="#c4c4c4"/><circle cx="722.400" cy="64" r="0.900" fill="#c4c4c4"/><path d="M724.8 68.8L722.4 68.8L724.8 66.39999999999999Z" fill="#6c6c6c"/></g><rect x="451.8" y="28.4" width="3.800" height="3" fill="none" stroke="#7a7a7a" stroke-width="0.700"/><path d="M454.8 28.4L456.6 26.6M455.3 26.4h1.500v1.500" stroke="#7a7a7a" stroke-width="0.700" fill="none"/><rect x="896.0" y="28.4" width="3.800" height="3" fill="none" stroke="#7a7a7a" stroke-width="0.700"/><path d="M899.0 28.4L900.8 26.6M899.5 26.4h1.500v1.500" stroke="#7a7a7a" stroke-width="0.700" fill="none"/><rect x="1068.6" y="28.4" width="3.800" height="3" fill="none" stroke="#7a7a7a" stroke-width="0.700"/><path d="M1071.6 28.4L1073.4 26.6M1072.1 26.4h1.500v1.500" stroke="#7a7a7a" stroke-width="0.700" fill="none"/></svg>
<div class="a" style="left:459px;top:21px;width:2px;height:544px;background:#1b1b1b"></div>
<div class="a" style="left:902px;top:21px;width:4px;height:544px;background:#222"></div>
<div class="a" style="left:904.900px;top:21px;width:1px;height:544px;background:#181818"></div>
<div class="a" style="left:462px;top:69px;width:439.600px;height:496px;background:#c9c9c9;overflow:hidden"><svg width="440" height="496" viewBox="465 72 440 496" style="left:0;top:0;overflow:hidden"><defs><filter id="c1" x="-10%" y="-10%" width="120%" height="120%"><feGaussianBlur stdDeviation="0.5"/></filter></defs><path d="M468.1 72V568M486.8 72V568M505.4 72V568M524.1 72V568M542.7 72V568M561.3 72V568M580.0 72V568M598.6 72V568M617.3 72V568M635.9 72V568M654.5 72V568M673.2 72V568M691.8 72V568M710.5 72V568M729.1 72V568M747.7 72V568M766.4 72V568M785.0 72V568M803.7 72V568M822.3 72V568M840.9 72V568M859.6 72V568M878.2 72V568M896.9 72V568M465 78.7H905M465 97.3H905M465 116.0H905M465 134.7H905M465 153.3H905M465 172.0H905M465 190.6H905M465 209.3H905M465 227.9H905M465 246.6H905M465 265.2H905M465 283.9H905M465 302.5H905M465 321.1H905M465 339.8H905M465 358.4H905M465 377.1H905M465 395.7H905M465 414.4H905M465 433.0H905M465 451.7H905M465 470.3H905M465 489.0H905M465 507.6H905M465 526.3H905M465 544.9H905M465 563.6H905" stroke="#c3c3c3" stroke-width="0.9" fill="none"/><path d="M673.200 72V568M465 395.450H905" stroke="#adadad" stroke-width="1.100" fill="none"/><path d="M465 72.300H905" stroke="#9c9c9c" stroke-width="1" fill="none"/><g filter="url(#c1)" fill="#b9b9b9"><path d="M640 250.5 Q672 247 706 250.5 L706.5 254 Q672 256 640.5 254 Z"/><path d="M645 254 L648 254 L641.5 312 L638 312 Z"/><path d="M698 254 L701 254 L707.5 312 L704 312 Z"/><rect x="655.5" y="254" width="2" height="52"/><rect x="666" y="254" width="2" height="52"/><rect x="677.5" y="254" width="2" height="52"/><rect x="688" y="254" width="2" height="52"/><path d="M634 313 L712 313 L708 318.5 L638 318.5 Z"/><rect x="652" y="305.500" width="43" height="13"/><path d="M641 318 L650 318 L640.5 394 L636.5 394 Z"/><path d="M695 318 L704 318 L709 394 L705 394 Z"/></g><path d="M465.400 72V568" stroke="#a4a4a4" stroke-width="1" fill="none"/><g filter="url(#c1)"><rect x="471" y="78.3" width="14.200" height="14" rx="1" fill="#d6d6d6" stroke="#b6b6b6" stroke-width="0.900"/><rect x="471" y="94.7" width="14.200" height="14" rx="1" fill="#d6d6d6" stroke="#b6b6b6" stroke-width="0.900"/><rect x="471" y="110.9" width="14.200" height="14" rx="1" fill="#d6d6d6" stroke="#b6b6b6" stroke-width="0.900"/><rect x="471" y="127.1" width="14.200" height="14" rx="1" fill="#d6d6d6" stroke="#b6b6b6" stroke-width="0.900"/><rect x="471" y="143.3" width="14.200" height="14" rx="1" fill="#d6d6d6" stroke="#b6b6b6" stroke-width="0.900"/><path d="M475 81.200 L484.200 88.400" stroke="#2e2e2e" stroke-width="1.700"/><path d="M476.400 81.200 L484 87" stroke="#8a8a8a" stroke-width="0.500"/><path d="M475.200 81 Q473.200 84 473 88.600" stroke="#e39a2a" stroke-width="0.900" fill="none"/><ellipse cx="475.200" cy="89.400" rx="2.200" ry="1.300" fill="#1a1a1a"/><circle cx="475.200" cy="89.200" r="0.500" fill="#bbb"/><path d="M473.400 99.200 L476.600 97 L477.600 97.900 H479.800 L480.800 97 L484 99.200 L483 101.600 L481.800 101 V106.400 H475.600 V101 L474.400 101.600 Z" fill="#fcfcfc"/><ellipse cx="475" cy="105.600" rx="2.200" ry="1.300" fill="#1a1a1a"/><circle cx="475" cy="105.400" r="0.500" fill="#bbb"/><circle cx="478.800" cy="117.600" r="4.700" fill="#3e3e3e"/><text x="478.900" y="120.500" font-size="8" font-weight="bold" text-anchor="middle" fill="#f3a21c" font-family="Liberation Serif, serif">i</text><ellipse cx="474.600" cy="122" rx="2.200" ry="1.300" fill="#1a1a1a"/><circle cx="474.600" cy="121.800" r="0.500" fill="#bbb"/><path d="M474.200 131.600 L477.400 130.400 L480.400 138.200 L475 139 Z" fill="#f6f6f6"/><path d="M476.800 130.400 L484.400 129.600 L483.200 136.800 L475.600 137.600 Z" fill="#f9a100"/><path d="M477.600 130.800 L484 130.100 L483.600 132.600 L477.200 133.400 Z" fill="#ffc324"/><path d="M473.400 148 L476.600 145.800 L477.600 146.700 H479.800 L480.800 145.800 L484 148 L483 150.400 L481.800 149.800 V155.200 H475.600 V149.800 L474.400 150.400 Z" fill="#c0c0c0"/><rect x="473.200" y="151.800" width="3" height="3.400" fill="#cfcfcf" stroke="#a6a6a6" stroke-width="0.700"/></g><g filter="url(#c1)"><rect x="543.900" y="153.700" width="292.500" height="89.500" fill="#ffffff" stroke="#6e6e6e" stroke-width="0.900"/></g><g fill="#2a2a2a"><circle cx="543.900" cy="153.700" r="1.500"/><circle cx="836.400" cy="153.700" r="1.500"/><circle cx="543.900" cy="243.200" r="1.500"/><circle cx="836.400" cy="243.200" r="1.500"/></g></svg></div>
<div class="a" style="left:906px;top:32px;width:168px;height:533px;background:#262626"></div><div class="a" style="left:907px;top:32.200px;width:125.800px;height:12.600px;background:#1a1a1a"></div><div class="a" style="left:931.200px;top:32.200px;width:25.800px;height:12.600px;background:#2e2e2e"></div><div class="t" style="left:912px;top:35.700px;font-size:6.800px;color:#4e4e4e;filter:blur(0.25px)">场景</div><div class="t" style="left:937px;top:35.700px;font-size:6.800px;color:#d0d0d0;filter:blur(0.25px)">织物</div><div class="t" style="left:962.8px;top:35.700px;font-size:6.800px;color:#505050;filter:blur(0.25px)">纽扣</div><div class="t" style="left:988.3px;top:35.700px;font-size:6.800px;color:#505050;filter:blur(0.25px)">扣眼</div><div class="t" style="left:1013.2px;top:35.700px;font-size:6.800px;color:#505050;filter:blur(0.25px)">明线</div><div class="a" style="left:931.2px;top:32.200px;width:1px;height:12.600px;background:#141414"></div><div class="a" style="left:957px;top:32.200px;width:1px;height:12.600px;background:#141414"></div><div class="a" style="left:982.8px;top:32.200px;width:1px;height:12.600px;background:#141414"></div><div class="a" style="left:1007px;top:32.200px;width:1px;height:12.600px;background:#141414"></div><div class="a" style="left:1032.8px;top:32.200px;width:1px;height:12.600px;background:#141414"></div><div class="a" style="left:967px;top:55.600px;width:34px;height:11.400px;background:#2d2d2d;border-radius:1px"></div><div class="a" style="left:1003px;top:55.600px;width:33.4px;height:11.400px;background:#2d2d2d;border-radius:1px"></div><div class="a" style="left:1038.2px;top:55.600px;width:34px;height:11.400px;background:#2d2d2d;border-radius:1px"></div><div class="t" style="left:981.200px;top:59.300px;font-size:6.700px;color:#a0a0a0;filter:blur(0.25px)">增加</div><div class="t" style="left:1016.800px;top:59.300px;font-size:6.700px;color:#444;filter:blur(0.25px)">复制</div><div class="t" style="left:1052.200px;top:59.300px;font-size:6.700px;color:#444;filter:blur(0.25px)">应用</div><div class="a hl" style="left:912px;top:70.900px;width:158px;background:#1c1c1c"></div><div class="a hl" style="left:915px;top:97.400px;width:152px;background:#222"></div><div class="a" style="left:934.600px;top:74.800px;width:21.200px;height:20.600px;background:#fff;filter:blur(0.3px)"></div><div class="t" style="left:961.200px;top:82.200px;font-size:6.250px;color:#82878e;filter:blur(0.25px)">FABRIC 1</div><div class="a hl" style="left:906px;top:188.800px;width:168px;height:1.200px;background:#181818"></div><div class="a" style="left:906px;top:192.200px;width:168px;height:11.200px;background:#1c1c1c"></div><div class="t tt" style="left:887.300px;top:195.400px;width:200px;color:#a4a4a4">属性编辑器</div><svg width="1074" height="579" viewBox="3 3 1074 579" style="left:0;top:0" ><path d="M924.800 87.600l2 1.700l3.400-2.700" stroke="#eeb000" stroke-width="1.600" fill="none" stroke-linecap="round"/><path d="M977 61.500v5M974.500 64h5" stroke="#b4b4b4" stroke-width="0.9"/><rect x="1010" y="61.600" width="3.600" height="3.600" rx="0.600" fill="#3c3c3c"/><rect x="1011.400" y="62.800" width="3.600" height="3.600" rx="0.600" fill="#424242"/><rect x="1045" y="62.400" width="3.600" height="3.600" fill="#3c3c3c"/><path d="M1048.400 61.800l1.800-1.400" stroke="#424242" stroke-width="0.8"/><path d="M909.800 29.200l2-1.600v1h2.200v1.200h-2.200v1zM909.800 201.600l2-1.600v1h2.200v1.200h-2.200v1z" fill="#c4c4c4"/><rect x="1068.6" y="200.4" width="3.800" height="3" fill="none" stroke="#7a7a7a" stroke-width="0.700"/><path d="M1071.6 200.4L1073.4 198.6M1072.1 198.4h1.500v1.500" stroke="#7a7a7a" stroke-width="0.700" fill="none"/></svg>
<div class="a" style="left:0;top:565px;width:1074px;height:14px;background:#232323"></div>
<div class="a" style="left:17px;top:564px;width:442px;height:2px;background:#232323"></div>
<div class="a hl" style="left:459px;top:564.300px;width:615px;background:#1a1a1a"></div>
<div class="t" style="left:5.400px;top:570.600px;font-size:5.500px;color:#484848;filter:blur(0.25px)">Version: 6.0.579 (r32956)</div>
<svg width="1074" height="579" viewBox="3 3 1074 579" style="left:0;top:0" ><rect x="1001.600" y="572.400" width="10.200" height="7.800" rx="0.800" fill="none" stroke="#7c7c7c" stroke-width="0.9"/><path d="M1006.700 572.400v7.800" stroke="#7c7c7c" stroke-width="0.9"/><rect x="1019.200" y="572.400" width="10" height="7.800" rx="0.800" fill="none" stroke="#7c7c7c" stroke-width="0.9"/><rect x="1036.400" y="572.400" width="10.400" height="7.800" rx="0.800" fill="none" stroke="#7c7c7c" stroke-width="0.9"/><text x="1024.200" y="578.200" font-size="4.600" text-anchor="middle" fill="#7c7c7c" font-family="Liberation Sans, sans-serif">3D</text><text x="1041.600" y="578.200" font-size="4.600" text-anchor="middle" fill="#7c7c7c" font-family="Liberation Sans, sans-serif">2D</text><path d="M1054 573v7" stroke="#303030" stroke-width="0.8"/><rect x="1059.600" y="571.600" width="9.800" height="9.400" fill="#1f1f1f"/><path d="M1066.200 574.400a2.400 2.400 0 1 0 0.600 2.800" stroke="#a0a0a0" stroke-width="0.9" fill="none"/><path d="M1065 573.400h2.200v2.200z" fill="#a0a0a0"/></svg>
<div class="a" style="left:17px;top:68.300px;width:441.400px;height:496.500px;border:1px solid #eeeeee;overflow:hidden;background:linear-gradient(#353537 0%,#3d3d3f 11%,#505052 26%,#626264 37%,#6e6e70 44%,#7c7c7e 55%,#818183 62%,#838385 100%)"><svg width="440" height="495" viewBox="21 72 440 495" style="left:0;top:0;overflow:hidden"><defs><filter id="b1" x="-10%" y="-10%" width="120%" height="120%"><feGaussianBlur stdDeviation="0.45"/></filter><filter id="b2" x="-20%" y="-20%" width="140%" height="140%"><feGaussianBlur stdDeviation="1.2"/></filter><filter id="b4" x="-20%" y="-20%" width="140%" height="140%"><feGaussianBlur stdDeviation="0.55"/></filter><filter id="b3" x="-20%" y="-20%" width="140%" height="140%"><feGaussianBlur stdDeviation="2.2"/></filter><linearGradient id="cl1" x1="0" y1="0" x2="1" y2="0"><stop offset="0" stop-color="#e9e9e9"/><stop offset="0.25" stop-color="#fbfbfb"/><stop offset="0.7" stop-color="#ffffff"/><stop offset="1" stop-color="#f4f4f4"/></linearGradient><linearGradient id="cl2" x1="0" y1="0" x2="1" y2="0"><stop offset="0" stop-color="#e0e0e0"/><stop offset="0.2" stop-color="#f3f3f3"/><stop offset="0.45" stop-color="#f6f6f6"/><stop offset="0.7" stop-color="#f0f0f0"/><stop offset="1" stop-color="#f2f2f2"/></linearGradient><linearGradient id="cl3" x1="0" y1="0" x2="1" y2="0"><stop offset="0" stop-color="#f4f4f4"/><stop offset="0.6" stop-color="#ebebeb"/><stop offset="1" stop-color="#dcdcdc"/></linearGradient><linearGradient id="cl4" x1="0" y1="0" x2="1" y2="0"><stop offset="0" stop-color="#dedede"/><stop offset="1" stop-color="#b4b4b4"/></linearGradient><linearGradient id="pk" x1="0" y1="0" x2="1" y2="0"><stop offset="0" stop-color="#d68fc9"/><stop offset="0.5" stop-color="#eba6df"/><stop offset="1" stop-color="#d48cc6"/></linearGradient></defs><polygon points="164.6,355.5 622.8,401.0 837.5,859.4 -258.4,538.8" fill="#838385"/><defs><linearGradient id="gmg" gradientUnits="userSpaceOnUse" x1="0" y1="352" x2="0" y2="450"><stop offset="0" stop-color="#9a9a9a"/><stop offset="1" stop-color="#ffffff"/></linearGradient><mask id="gm" maskUnits="userSpaceOnUse" x="0" y="300" width="500" height="300"><rect x="0" y="300" width="500" height="300" fill="url(#gmg)"/></mask></defs><g mask="url(#gm)"><path d="M164.6 355.5L-258.4 538.8M176.5 356.7L-239.2 544.4M188.6 357.9L-219.5 550.2M200.9 359.1L-199.0 556.1M213.4 360.4L-177.9 562.3M226.1 361.6L-156.0 568.7M239.0 362.9L-133.3 575.4M252.1 364.2L-109.8 582.2M265.4 365.5L-85.5 589.4M278.9 366.9L-60.2 596.8M292.6 368.2L-33.9 604.4M306.6 369.6L-6.6 612.4M320.8 371.0L21.8 620.7M335.2 372.4L51.3 629.4M349.9 373.9L82.1 638.4M364.8 375.4L114.2 647.8M379.9 376.9L147.7 657.6M395.4 378.4L182.7 667.8M411.0 380.0L219.3 678.5M427.0 381.5L257.6 689.7M443.2 383.2L297.7 701.5M459.8 384.8L339.8 713.8M476.6 386.5L384.0 726.7M493.7 388.2L430.5 740.3M511.1 389.9L479.4 754.6M528.9 391.6L531.0 769.7M547.0 393.4L585.5 785.7M565.4 395.3L643.1 802.5M584.2 397.1L704.0 820.4M603.3 399.0L768.7 839.3M622.8 401.0L837.5 859.4M164.6 355.5L622.8 401.0M157.9 358.4L625.1 405.8M151.0 361.4L627.4 410.8M143.9 364.5L629.9 416.1M136.5 367.7L632.5 421.6M128.8 371.0L635.2 427.5M120.8 374.5L638.1 433.6M112.4 378.1L641.1 440.1M103.7 381.9L644.4 447.0M94.6 385.8L647.8 454.2M85.2 389.9L651.4 461.9M75.3 394.2L655.2 470.1M65.0 398.7L659.3 478.8M54.1 403.4L663.6 488.1M42.8 408.3L668.2 498.0M30.9 413.4L673.2 508.6M18.4 418.8L678.5 520.0M5.3 424.5L684.3 532.2M-8.6 430.5L690.5 545.4M-23.2 436.9L697.2 559.7M-38.6 443.5L704.4 575.3M-54.9 450.6L712.4 592.2M-72.1 458.1L721.0 610.7M-90.4 466.0L730.6 631.1M-109.9 474.4L741.1 653.5M-130.6 483.4L752.8 678.5M-152.7 493.0L765.8 706.3M-176.4 503.3L780.4 737.5M-201.7 514.2L796.9 772.8M-229.0 526.0L815.8 813.1M-258.4 538.8L837.5 859.4" fill="none" stroke="#5a5a5c" stroke-opacity="0.1" stroke-width="1.900"/><path d="M164.6 355.5L-258.4 538.8M176.5 356.7L-239.2 544.4M188.6 357.9L-219.5 550.2M200.9 359.1L-199.0 556.1M213.4 360.4L-177.9 562.3M226.1 361.6L-156.0 568.7M239.0 362.9L-133.3 575.4M252.1 364.2L-109.8 582.2M265.4 365.5L-85.5 589.4M278.9 366.9L-60.2 596.8M292.6 368.2L-33.9 604.4M306.6 369.6L-6.6 612.4M320.8 371.0L21.8 620.7M335.2 372.4L51.3 629.4M349.9 373.9L82.1 638.4M364.8 375.4L114.2 647.8M379.9 376.9L147.7 657.6M395.4 378.4L182.7 667.8M411.0 380.0L219.3 678.5M427.0 381.5L257.6 689.7M443.2 383.2L297.7 701.5M459.8 384.8L339.8 713.8M476.6 386.5L384.0 726.7M493.7 388.2L430.5 740.3M511.1 389.9L479.4 754.6M528.9 391.6L531.0 769.7M547.0 393.4L585.5 785.7M565.4 395.3L643.1 802.5M584.2 397.1L704.0 820.4M603.3 399.0L768.7 839.3M622.8 401.0L837.5 859.4M164.6 355.5L622.8 401.0M157.9 358.4L625.1 405.8M151.0 361.4L627.4 410.8M143.9 364.5L629.9 416.1M136.5 367.7L632.5 421.6M128.8 371.0L635.2 427.5M120.8 374.5L638.1 433.6M112.4 378.1L641.1 440.1M103.7 381.9L644.4 447.0M94.6 385.8L647.8 454.2M85.2 389.9L651.4 461.9M75.3 394.2L655.2 470.1M65.0 398.7L659.3 478.8M54.1 403.4L663.6 488.1M42.8 408.3L668.2 498.0M30.9 413.4L673.2 508.6M18.4 418.8L678.5 520.0M5.3 424.5L684.3 532.2M-8.6 430.5L690.5 545.4M-23.2 436.9L697.2 559.7M-38.6 443.5L704.4 575.3M-54.9 450.6L712.4 592.2M-72.1 458.1L721.0 610.7M-90.4 466.0L730.6 631.1M-109.9 474.4L741.1 653.5M-130.6 483.4L752.8 678.5M-152.7 493.0L765.8 706.3M-176.4 503.3L780.4 737.5M-201.7 514.2L796.9 772.8M-229.0 526.0L815.8 813.1M-258.4 538.8L837.5 859.4" fill="none" stroke="#5a5a5c" stroke-opacity="0.46" stroke-width="0.900"/></g><g filter="url(#b4)" fill="#1a1a1c" fill-opacity="0.27"><path d="M224 419 L212.800 437.500 L218.900 452.800 L230 459.700 L241 461 L250.800 459.700 L271.700 461 L289.700 462.600 L274.400 454.200 L263.300 445.800 L250.800 438 L235 430 Z"/></g><g filter="url(#b4)" stroke="#000" stroke-opacity="0.17" stroke-width="2" fill="none"><path d="M266 441.500 L283 447.500 L320 472" stroke-width="2.200"/><path d="M302.500 428 L343.500 442.800" stroke-width="2.200"/></g><g filter="url(#b1)"><path d="M242.600 443 L246.400 443 L244.300 460.600 L241.600 461.400 L239 460.400 Z" fill="#e29bd8"/><path d="M297 372 L314.600 374 L314.800 421.600 L302 423.400 Z" fill="url(#cl3)"/><path d="M311.500 286.400 L314 286.400 L311 350 L300.500 350 Z" fill="url(#cl4)"/><path d="M327.800 372 L336.600 371 L346.200 443 L343.800 444.600 L341.200 443.600 Z" fill="url(#pk)"/><path d="M314.200 285 L317.800 285 L315 352 L310.800 352 Z" fill="url(#pk)"/><path d="M326.600 285 L330.100 285 L328 357 L323.800 357 Z" fill="url(#pk)"/><path d="M338.900 285 L342.400 285 L343.200 360 L339.500 360 Z" fill="url(#pk)"/><path d="M312.200 277 L347.900 280.600 L348 285.400 L311.400 286.600 Z" fill="#e29ed9"/><path d="M322 355 L340.500 357 L346.400 359.600 L329.300 372 L295.800 371 L300 364 Z" fill="#d698cd"/><path d="M295.800 371 L329.300 372 L346.400 359.600 L346.200 361.600 L328.600 377 L296.400 376.400 Z" fill="#dea0d6"/><path d="M312.800 376.600 L320.400 377 L325.400 472.600 L322.800 474.600 L320.200 473.200 Z" fill="url(#pk)"/><path d="M296.400 356.400 L309 350.600 L325.200 352.200 L325.200 359.800 L313.400 368.600 L296.200 367.400 Z" fill="#d5cd84"/><path d="M296.400 356.400 L309 350.600 L325.200 352.200 L313.200 359.200 Z" fill="#e3dda8"/><path d="M313.200 359.200 L325.200 352.200 L325.200 359.800 L313.400 368.600 Z" fill="#c8b57c"/><path d="M314.400 361 L324.200 355 L324.200 357.400 L314.600 363.600 Z" fill="#c9a0b4"/><path d="M296.600 361.600 L313.300 363.600" stroke="#b5a962" stroke-width="0.700" fill="none"/><path d="M299.500 348.300 L305 346.400 L318.500 347.500 L318.500 352.400 L313 355 L299.300 354 Z" fill="#d9d28e"/><path d="M299.500 348.300 L305 346.400 L318.500 347.500 L313 349.900 Z" fill="#e8e3b4"/><path d="M313 349.900 L318.500 347.500 L318.500 352.400 L313 355 Z" fill="#c4b878"/><path d="M299.600 351.200 L313 352.400" stroke="#b5a962" stroke-width="0.600" fill="none"/><path d="M273.900 276.900 C282 276.200 300 276.200 312.200 276.600 L311.500 286.400 L301.300 350 L298.600 358 L296 370 L237.800 362 L246 342 L256 317 L265 295.300 Z" fill="url(#cl1)"/><path d="M237.800 361.400 L296.200 364 L298.900 378.300 L300.200 400 L301.300 420 L302.300 438.200 C296 438.900 290 439.200 283.300 439.500 C277 440.400 272 441 267.800 441 C262 440.400 258 440.300 254.400 440.700 C250 442 247.500 443.400 245.600 445.200 C242 448.500 239 452 236.200 455.200 C233.500 452 231 448.200 229.200 444.500 C226.600 440 225.200 437 224.800 433.900 C224.500 430 224.600 426 225 422.800 C226 415 227.600 408 228.900 400.600 C230.400 393 232 386 233.300 378.300 Z" fill="url(#cl2)"/></g><clipPath id="cc"><path d="M273.900 276.900 C282 276.200 300 276.200 312.200 276.600 L311.500 286.400 L301.300 350 L298.600 358 L296 370 L237.800 362 L246 342 L256 317 L265 295.300 Z"/><path d="M237.800 361.400 L296.200 364 L298.900 378.300 L300.200 400 L301.300 420 L302.300 438.200 C296 438.900 290 439.200 283.300 439.500 C277 440.400 272 441 267.800 441 C262 440.400 258 440.300 254.400 440.700 C250 442 247.500 443.400 245.600 445.200 C242 448.500 239 452 236.200 455.200 C233.500 452 231 448.200 229.200 444.500 C226.600 440 225.200 437 224.800 433.900 C224.500 430 224.600 426 225 422.800 C226 415 227.600 408 228.900 400.600 C230.400 393 232 386 233.300 378.300 Z"/></clipPath><g clip-path="url(#cc)"><g filter="url(#b3)" fill="none" stroke-linecap="round"><path d="M231 386 L225.500 434" stroke="#cfcfcf" stroke-width="3"/><path d="M244 380 L238 448" stroke="#f6f6f6" stroke-width="4"/><path d="M258 384 L254 438" stroke="#e1e1e1" stroke-width="5"/><path d="M272 386 L270 438" stroke="#f8f8f8" stroke-width="5"/><path d="M286 384 L286 436" stroke="#dfdfdf" stroke-width="5"/><path d="M298 384 L300 436" stroke="#e2e2e2" stroke-width="3"/><path d="M262 368.500 L297 371.500" stroke="#d8d8d8" stroke-width="3.500"/><path d="M240 363 L262 365" stroke="#ececec" stroke-width="2.500"/><path d="M268 286 L236 362" stroke="#e6e6e6" stroke-width="2.600"/><path d="M225 420 L236 452" stroke="#d4d4d4" stroke-width="3"/></g></g><g filter="url(#b1)"><rect x="27.200" y="77.8" width="13.600" height="14.200" fill="#4c4c4c" fill-opacity="0.55" stroke="#606060" stroke-opacity="0.8" stroke-width="0.800"/><rect x="27.200" y="100" width="13.600" height="14.200" fill="#4c4c4c" fill-opacity="0.55" stroke="#606060" stroke-opacity="0.8" stroke-width="0.800"/><rect x="27.200" y="116.2" width="13.600" height="14.200" fill="#4c4c4c" fill-opacity="0.55" stroke="#606060" stroke-opacity="0.8" stroke-width="0.800"/><rect x="27.200" y="132.3" width="13.600" height="14.200" fill="#4c4c4c" fill-opacity="0.55" stroke="#606060" stroke-opacity="0.8" stroke-width="0.800"/><rect x="27.200" y="148.4" width="13.600" height="14.200" fill="#4c4c4c" fill-opacity="0.55" stroke="#606060" stroke-opacity="0.8" stroke-width="0.800"/><rect x="27.200" y="165" width="13.600" height="14.200" fill="#4c4c4c" fill-opacity="0.55" stroke="#606060" stroke-opacity="0.8" stroke-width="0.800"/><rect x="27.200" y="181" width="13.600" height="14.200" fill="#4c4c4c" fill-opacity="0.55" stroke="#606060" stroke-opacity="0.8" stroke-width="0.800"/><rect x="27.200" y="197.8" width="13.600" height="14.200" fill="#4c4c4c" fill-opacity="0.55" stroke="#606060" stroke-opacity="0.8" stroke-width="0.800"/><path d="M29.600 88.600 L31.400 82.400 Q34.600 79.400 38.200 82 L38.600 88.600 Q34 90.600 29.600 88.600 Z" fill="#a6a6a6"/><path d="M31.400 82.400 Q34.600 79.400 38.200 82 L35.400 84.200 Z" fill="#cdcdcd"/><path d="M35.600 89.400 L39.800 86.800 L40 88.600 L36.600 90.400 Z" fill="#151515"/><path d="M28.800 104.600 L32 102.400 L33 103.200 H35.400 L36.400 102.400 L39.600 104.600 L38.400 107 L37.400 106.400 V111.600 H31 V106.400 L30 107 Z" fill="#ececec"/><ellipse cx="30.200" cy="111.400" rx="1.900" ry="1.200" fill="#111"/><circle cx="30.200" cy="111.400" r="0.450" fill="#ddd"/><circle cx="30.4" cy="126.8" r="1.2" fill="#f4b41a"/><circle cx="30" cy="123.6" r="1.2" fill="#f4b41a"/><circle cx="31.6" cy="120.6" r="1.3" fill="#f4b41a"/><circle cx="34.6" cy="119.4" r="1.4" fill="#f4b41a"/><circle cx="37.6" cy="120.8" r="1.5" fill="#f4b41a"/><circle cx="38.2" cy="124.2" r="1.8" fill="#f4b41a"/><circle cx="35.2" cy="126.2" r="1.9" fill="#f4b41a"/><circle cx="32.4" cy="122.4" r="0.9" fill="#f4b41a"/><circle cx="29.600" cy="128" r="1.100" fill="#e88a00"/><circle cx="34.400" cy="137.400" r="2.500" fill="#e8e8e8"/><path d="M30.400 145.400 Q30.400 141.200 34.400 141 Q38.400 141.200 38.400 145.400 Z" fill="#e0e0e0"/><ellipse cx="29.800" cy="144.800" rx="1.900" ry="1.100" fill="#111"/><path d="M30.600 152.400 Q34 150.200 38.800 151.600 L38 158.800 Q33 160.400 29.400 158 Z" fill="#f59a00"/><path d="M31 152.200 Q34.600 150.600 38.800 151.600 L38.600 153.600 Q34.600 152.600 30.400 154.400 Z" fill="#ffc21a"/><rect x="31" y="156.400" width="5.600" height="1.600" rx="0.800" fill="#fde9c4"/><path d="M30.400 173.800 L38 167.400 L38.400 176 L33 176.600 Z" fill="#b8b8b8"/><path d="M30.400 173.800 L33 176.600 L38.400 176 L34.600 173.200 Z" fill="#4a4a4a"/><path d="M34.800 170.200 L38 167.400 L38.400 176 Z" fill="#e2e2e2"/><ellipse cx="34" cy="186.200" rx="2.900" ry="3.400" fill="#bdbdbd"/><path d="M29.600 193.800 Q30 190.600 34 190.400 Q38 190.600 38.400 193.800 Z" fill="#a8a8a8"/><circle cx="34.400" cy="204.400" r="5" fill="#e8961a"/><path d="M29.400 204.400 H39.400 M34.400 199.400 V209.400 M31 201 Q34.400 203 37.800 201 M31 207.800 Q34.400 205.800 37.800 207.800" stroke="#b06a00" stroke-width="0.600" fill="none"/><ellipse cx="30" cy="209.200" rx="1.900" ry="1.100" fill="#111"/></g></svg></div>
</div>
</body></html>
